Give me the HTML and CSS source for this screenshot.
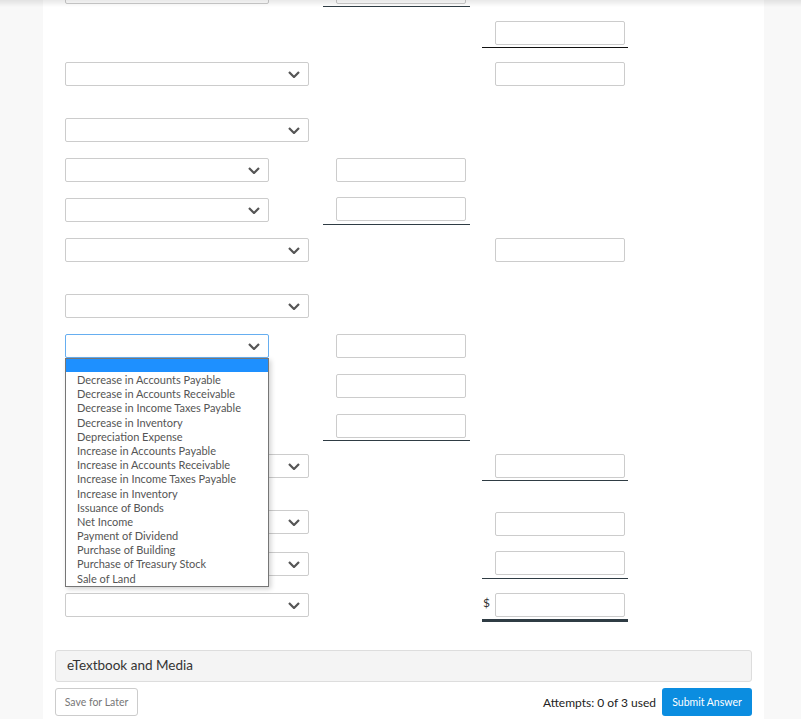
FILE: index.html
```html
<!DOCTYPE html>
<html>
<head>
<meta charset="utf-8">
<link rel="stylesheet" href="styles.css">
</head>
<body>
<div class="topshade"></div>
<div class="page">
  <div class="form">
    <div class="row r0">
      <div class="c1"><div class="sel short"><svg class="chev" width="12" height="7" viewBox="0 0 12 7"><path d="M1 1 L6 6 L11 1"/></svg></div></div>
      <div class="c2 ul"><div class="inp"></div></div>
      <div class="c3"></div>
    </div>
    <div class="row m17">
      <div class="c1"></div>
      <div class="c2"></div>
      <div class="c3 ul dark"><div class="inp"></div></div>
    </div>
    <div class="row m17">
      <div class="c1"><div class="sel long"><svg class="chev" width="12" height="7" viewBox="0 0 12 7"><path d="M1 1 L6 6 L11 1"/></svg></div></div>
      <div class="c2"></div>
      <div class="c3"><div class="inp"></div></div>
    </div>
    <div class="row m32">
      <div class="c1"><div class="sel long"><svg class="chev" width="12" height="7" viewBox="0 0 12 7"><path d="M1 1 L6 6 L11 1"/></svg></div></div>
      <div class="c2"></div>
      <div class="c3"></div>
    </div>
    <div class="row">
      <div class="c1"><div class="sel short"><svg class="chev" width="12" height="7" viewBox="0 0 12 7"><path d="M1 1 L6 6 L11 1"/></svg></div></div>
      <div class="c2"><div class="inp"></div></div>
      <div class="c3"></div>
    </div>
    <div class="row">
      <div class="c1"><div class="sel short"><svg class="chev" width="12" height="7" viewBox="0 0 12 7"><path d="M1 1 L6 6 L11 1"/></svg></div></div>
      <div class="c2 ul"><div class="inp up1"></div></div>
      <div class="c3"></div>
    </div>
    <div class="row">
      <div class="c1"><div class="sel long"><svg class="chev" width="12" height="7" viewBox="0 0 12 7"><path d="M1 1 L6 6 L11 1"/></svg></div></div>
      <div class="c2"></div>
      <div class="c3"><div class="inp"></div></div>
    </div>
    <div class="row m32">
      <div class="c1"><div class="sel long"><svg class="chev" width="12" height="7" viewBox="0 0 12 7"><path d="M1 1 L6 6 L11 1"/></svg></div></div>
      <div class="c2"></div>
      <div class="c3"></div>
    </div>
    <div class="row top">
      <div class="c1 anchor">
        <div class="sel short focus"><svg class="chev" width="12" height="7" viewBox="0 0 12 7"><path d="M1 1 L6 6 L11 1"/></svg></div>
        <div class="popup">
          <div class="opt blank"></div>
          <div class="opt">Decrease in Accounts Payable</div>
          <div class="opt">Decrease in Accounts Receivable</div>
          <div class="opt">Decrease in Income Taxes Payable</div>
          <div class="opt">Decrease in Inventory</div>
          <div class="opt">Depreciation Expense</div>
          <div class="opt">Increase in Accounts Payable</div>
          <div class="opt">Increase in Accounts Receivable</div>
          <div class="opt">Increase in Income Taxes Payable</div>
          <div class="opt">Increase in Inventory</div>
          <div class="opt">Issuance of Bonds</div>
          <div class="opt">Net Income</div>
          <div class="opt">Payment of Dividend</div>
          <div class="opt">Purchase of Building</div>
          <div class="opt">Purchase of Treasury Stock</div>
          <div class="opt">Sale of Land</div>
        </div>
      </div>
      <div class="c2"><div class="inp"></div></div>
      <div class="c3"></div>
    </div>
    <div class="row">
      <div class="c1"><div class="sel short"><svg class="chev" width="12" height="7" viewBox="0 0 12 7"><path d="M1 1 L6 6 L11 1"/></svg></div></div>
      <div class="c2"><div class="inp"></div></div>
      <div class="c3"></div>
    </div>
    <div class="row">
      <div class="c1"><div class="sel short"><svg class="chev" width="12" height="7" viewBox="0 0 12 7"><path d="M1 1 L6 6 L11 1"/></svg></div></div>
      <div class="c2 ul"><div class="inp"></div></div>
      <div class="c3"></div>
    </div>
    <div class="row">
      <div class="c1"><div class="sel long"><svg class="chev" width="12" height="7" viewBox="0 0 12 7"><path d="M1 1 L6 6 L11 1"/></svg></div></div>
      <div class="c2"></div>
      <div class="c3 ul"><div class="inp"></div></div>
    </div>
    <div class="row m32">
      <div class="c1"><div class="sel long"><svg class="chev" width="12" height="7" viewBox="0 0 12 7"><path d="M1 1 L6 6 L11 1"/></svg></div></div>
      <div class="c2"></div>
      <div class="c3"><div class="inp down2"></div></div>
    </div>
    <div class="row m18">
      <div class="c1"><div class="sel long"><svg class="chev" width="12" height="7" viewBox="0 0 12 7"><path d="M1 1 L6 6 L11 1"/></svg></div></div>
      <div class="c2"></div>
      <div class="c3 ul"><div class="inp up1"></div></div>
    </div>
    <div class="row m17">
      <div class="c1"><div class="sel long"><svg class="chev" width="12" height="7" viewBox="0 0 12 7"><path d="M1 1 L6 6 L11 1"/></svg></div></div>
      <div class="c2"></div>
      <div class="c3 ul total"><span class="dollar">$</span><div class="inp"></div></div>
    </div>
  </div>

  <div class="media">eTextbook and Media</div>

  <div class="actions">
    <button class="save">Save for Later</button>
    <div class="right">
      <span class="attempts">Attempts: 0 of 3 used</span>
      <button class="submit">Submit Answer</button>
    </div>
  </div>
</div>
</body>
</html>
```

FILE: styles.css
```css
html, body {
  margin: 0;
  padding: 0;
}
body {
  background: #f8f8f8;
  font-family: "Lato", "Liberation Sans", sans-serif;
  color: #333;
  overflow: hidden;
}
.topshade {
  position: fixed;
  top: 0;
  left: 0;
  right: 0;
  height: 7px;
  background: linear-gradient(to bottom, rgba(0,0,0,0.09), rgba(0,0,0,0));
  z-index: 10;
  pointer-events: none;
}
.page {
  margin-left: 43px;
  width: 721px;
  min-height: 100vh;
  background: #fff;
  padding: 0 12px;
  box-sizing: border-box;
}
.form {
  display: flex;
  flex-direction: column;
  margin-left: 10px;
}
.row {
  display: grid;
  grid-template-columns: 258px 159px 146px;
  grid-template-rows: 24px;
  margin-top: 16px;
}
.row.r0 { margin-top: -20px; }
.row.m17 { margin-top: 17px; }
.row.m18 { margin-top: 18px; }
.row.m32 { margin-top: 32px; }
.c1, .c2, .c3 {
  align-self: start;
  box-sizing: border-box;
}
.c2 { width: 147px; padding-left: 13px; padding-right: 4px; }
.c3 { padding-left: 13px; padding-right: 3px; }
.ul {
  border-bottom: 1px solid #2f3c44;
  padding-bottom: 2px;
}
.ul.dark { border-bottom-color: #111; }
.ul.total {
  border-bottom: 3px solid #2f3c44;
  display: flex;
  align-items: flex-start;
  padding-left: 0;
}
.dollar {
  width: 13px;
  font-size: 12px;
  line-height: 14px;
  margin-top: 3px;
  color: #333;
  padding-left: 1px;
  box-sizing: border-box;
}
.inp {
  width: 130px;
  height: 24px;
  border: 1px solid #ccc;
  border-radius: 2px;
  box-sizing: border-box;
  background: #fff;
}
.inp.up1 { margin-top: -1px; margin-bottom: 1px; }
.inp.down2 { margin-top: 2px; }
.sel {
  height: 24px;
  border: 1px solid #ccc;
  border-radius: 2px;
  box-sizing: border-box;
  background: #fff;
  display: flex;
  align-items: center;
  justify-content: flex-end;
  padding-right: 8px;
}
.sel.short { width: 204px; }
.sel.long { width: 244px; }
.sel.focus { border-color: #66aef0; }
.chev path {
  fill: none;
  stroke: #555;
  stroke-width: 2.2;
  stroke-linecap: butt;
  stroke-linejoin: miter;
}
.anchor { position: relative; }
.row.top { z-index: 5; }
.popup {
  position: absolute;
  top: 24px;
  left: 0;
  width: 204px;
  height: 229px;
  box-sizing: border-box;
  border: 1px solid #767676;
  background: #fff;
  box-shadow: 2px 2px 5px rgba(0,0,0,0.18);
  z-index: 20;
  overflow: hidden;
}
.opt {
  font-size: 11px;
  line-height: 14.2px;
  height: 14.2px;
  padding-left: 11px;
  color: #555;
  white-space: nowrap;
}
.opt.blank {
  height: 13px;
  margin-bottom: 1px;
  background: #1e90ff;
}
.media {
  margin-top: 33px;
  height: 32px;
  box-sizing: border-box;
  background: #f4f4f4;
  border: 1px solid #ddd;
  border-radius: 3px;
  font-size: 13.5px;
  line-height: 29px;
  padding-left: 11px;
  color: #333;
}
.actions {
  margin-top: 6px;
  display: flex;
  justify-content: space-between;
  align-items: center;
}
.save {
  width: 83px;
  height: 28px;
  border: 1px solid #ccc;
  border-radius: 3px;
  background: #fff;
  font-family: "Lato", "Liberation Sans", sans-serif;
  font-size: 10.5px;
  color: #777;
  padding: 0;
}
.right {
  display: flex;
  align-items: center;
  gap: 6px;
}
.attempts {
  font-size: 12px;
  color: #222;
}
.submit {
  width: 90px;
  height: 28px;
  border: none;
  border-radius: 3px;
  background: #0b8de0;
  color: #fff;
  font-family: "Lato", "Liberation Sans", sans-serif;
  font-size: 10.5px;
  padding: 0;
}
```
